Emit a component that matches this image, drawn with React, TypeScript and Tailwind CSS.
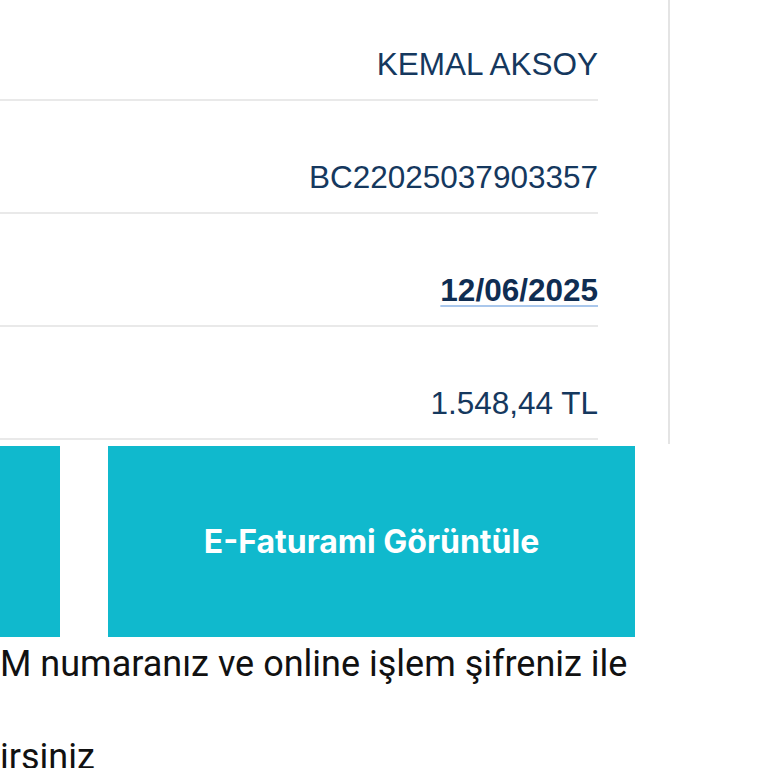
const rows = [
  { value: 'KEMAL AKSOY' },
  { value: 'BC22025037903357' },
  { value: '12/06/2025', date: true },
  { value: '1.548,44 TL' },
]

export default function App() {
  return (
    <div className="w-[768px] h-[768px] overflow-hidden bg-white">
      {/* invoice summary card */}
      <div className="w-[670px] border-r-2 border-[#e4e4e4] pr-[70px] pb-[4px] font-['Liberation_Sans',Arial,sans-serif]">
        {rows.map((row, i) => (
          <div
            key={row.value}
            className={`${i === 0 ? 'h-[101px]' : 'h-[113px]'} flex items-end justify-end pb-[17px] border-b-2 border-[#e9e9e9]`}
          >
            {row.date ? (
              <span className="text-[31.5px] leading-[36px] font-bold text-[#0f2d52] underline decoration-[#a9c7ec] decoration-2 underline-offset-[4px]">
                {row.value}
              </span>
            ) : (
              <span className="text-[31.5px] leading-[36px] text-[#15385e]">{row.value}</span>
            )}
          </div>
        ))}
      </div>

      <div className="flex gap-[48px] mt-[2px] h-[191px]">
        <button className="w-[60px] bg-[#10b9cd]" />
        <button className="w-[527px] bg-[#10b9cd] text-white text-[32px] font-bold font-['Inter',sans-serif]">
          E-Faturami Görüntüle
        </button>
      </div>

      <div className="font-['Roboto',sans-serif] text-[36px] text-[#111] whitespace-nowrap">
        <div className="mt-[5px] leading-[44px]">M numaranız ve online işlem şifreniz ile</div>
        <div className="mt-[49px] leading-[44px]">irsiniz</div>
      </div>
    </div>
  )
}
